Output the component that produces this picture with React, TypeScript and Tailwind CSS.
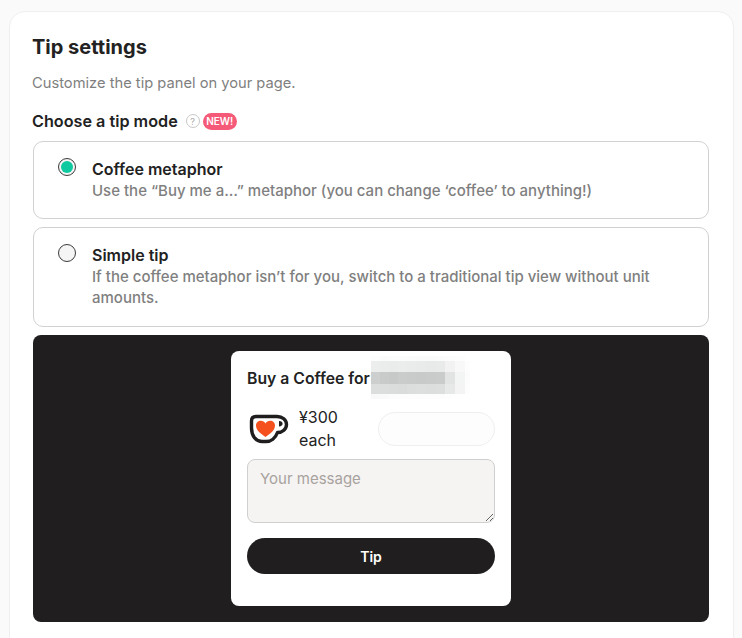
const font = { fontFamily: '"Inter", "Noto Sans", sans-serif' };

function Cup() {
  return (
    <svg width="42" height="32" viewBox="0 0 42 32" fill="none" className="shrink-0">
      <path d="M3.5 8C3.5 5 5.5 3.5 8 3.5H29C34.5 3.5 38.5 7 38.5 11.5C38.5 16 34.5 19.5 29.5 19.5C27.5 25 23 28.5 18 28.5H14C8 28.5 3.5 23 3.5 15Z" fill="#fff" stroke="#1f1d1d" strokeWidth="3.4" strokeLinejoin="round" />
      <path d="M17.5 24C13 21 8 17.5 8 12.6C8 9.6 10.2 7.8 12.8 7.8C14.8 7.8 16.5 8.8 17.5 10.4C18.5 8.8 20.2 7.8 22.2 7.8C24.8 7.8 27 9.6 27 12.6C27 17.5 22 21 17.5 24Z" fill="#f4511e" />
      <path d="M31 8V13.4C33.4 13.2 34.6 12.2 34.6 10.7C34.6 9.2 33.4 8.2 31 8Z" fill="#1f1d1d" />
    </svg>
  );
}

function Mosaic() {
  const widths = [9, 9, 9, 9, 9, 10, 10, 9, 10, 10, 5];
  const rows: { h: number; c: string[] }[] = [
    { h: 5, c: ["#fdfdfd", "#fbfbfb", "#fcfcfc", "#fcfcfc", "#fbfbfb", "#fafafa", "#fafafa", "#fbfbfb", "#fcfcfc", "#fdfdfd", "#ffffff"] },
    { h: 11, c: ["#eceeed", "#ebedec", "#eaeceb", "#ebedec", "#eaeceb", "#e9ebea", "#e8eae9", "#e9ebea", "#f1f2f1", "#f8f8f8", "#fdfdfd"] },
    { h: 12, c: ["#cdcfcf", "#c9cbcb", "#c7c9c9", "#cacccc", "#c9cbcb", "#c8caca", "#c9cbcb", "#cacccc", "#e2e4e4", "#f3f4f4", "#fcfcfc"] },
    { h: 10, c: ["#dcdede", "#dcdede", "#dbdddd", "#dadcdc", "#dcdede", "#dddfdf", "#dcdede", "#dddfdf", "#e7e9e9", "#f4f4f4", "#fdfdfd"] },
    { h: 5, c: ["#f9f9f9", "#fafafa", "#fcfcfc", "#fdfdfd", "#fdfdfd", "#fdfdfd", "#fdfdfd", "#fdfdfd", "#fefefe", "#ffffff", "#ffffff"] },
  ];
  let y = 0;
  return (
    <svg width="99" height="43" viewBox="0 0 99 43" shapeRendering="crispEdges" className="block">
      {rows.map((row, ri) => {
        let x = 0;
        const top = y;
        y += row.h;
        return row.c.map((c, ci) => {
          const left = x;
          x += widths[ci];
          return <rect key={`${ri}-${ci}`} x={left} y={top} width={widths[ci]} height={row.h} fill={c} />;
        });
      })}
    </svg>
  );
}

function Option({ selected, title, desc, h }: { selected?: boolean; title: string; desc: string; h: string }) {
  return (
    <div className={`flex items-start gap-4 rounded-[10px] border border-[#d1d1d1] bg-white pr-6 pl-6 pt-4 ${h}`}>
      <div className="flex h-[18px] w-[18px] shrink-0 items-center justify-center rounded-full border border-[#3a3a3a] bg-[#f6f5f5]">
        {selected && <div className="h-3 w-3 rounded-full bg-[#0fc9a0]" />}
      </div>
      <div className="min-w-0">
        <div className="text-[16px] leading-[22px] font-semibold text-[#222222]">{title}</div>
        <div className="text-[15px] leading-[21px] font-medium text-[#7f7f7f]">{desc}</div>
      </div>
    </div>
  );
}

export default function App() {
  return (
    <div className="h-[638px] w-[742px] overflow-hidden bg-[#fafafa] pt-[11px] pl-[9px]" style={font}>
      <div className="h-[640px] w-[725px] rounded-t-[16px] border border-[#efefef] bg-white pt-[23px] pr-6 pl-[22px]">
        <h2 className="text-[20px] leading-[24px] font-bold text-[#222222]">Tip settings</h2>
        <p className="mt-[13px] text-[14.7px] leading-[22px] text-[#7f7f7f]">Customize the tip panel on your page.</p>
        <div className="mt-[16px] flex items-center text-[16.2px] leading-[22px] font-semibold text-[#222222]">
          Choose a tip mode
          <span className="ml-[8px] flex h-[14px] w-[14px] items-center justify-center rounded-full border-[1.5px] border-[#c8c8c8] text-[9px] leading-none font-medium text-[#b0b0b0]">?</span>
          <span className="ml-[3px] flex h-[17px] w-[34px] items-center justify-center rounded-full bg-[#f55a78] text-[10px] leading-none font-semibold text-white">NEW!</span>
        </div>
        <div className="mt-[9px] ml-[1px] flex flex-col gap-2">
          <Option selected h="h-[78px]" title="Coffee metaphor" desc="Use the “Buy me a…” metaphor (you can change ‘coffee’ to anything!)" />
          <Option h="h-[100px]" title="Simple tip" desc="If the coffee metaphor isn’t for you, switch to a traditional tip view without unit amounts." />
        </div>
        <div className="mt-2 ml-[1px] flex h-[287px] justify-center rounded-[8px] bg-[#201e1e] pt-4">
          <div className="h-[255px] w-[280px] rounded-[8px] bg-white px-4 pt-[17px]">
            <div className="flex h-[22px] items-center text-[15.75px] font-semibold whitespace-nowrap text-[#222222]">
              Buy a Coffee for
              <div className="relative ml-[1px] h-[22px] w-[99px]">
                <div className="absolute -top-[12px] left-0"><Mosaic /></div>
              </div>
            </div>
            <div className="mt-[16px] flex h-[46px] items-center">
              <div className="ml-[1px]"><Cup /></div>
              <div className="ml-[9px] w-[58px] text-[16px] leading-[23px] text-[#222222]">¥300 each</div>
              <div className="ml-[21px] h-[34px] w-[117px] rounded-[17px] border border-[#efefef] bg-[#fdfdfd]" />
            </div>
            <textarea
              readOnly
              placeholder="Your message"
              className="mt-[7px] block h-[64px] w-[248px] rounded-[8px] border border-[#cfcfcf] bg-[#f5f4f3] px-3 pt-[9px] pb-2 text-[15px] leading-[20px] placeholder:text-[#a8a29e]"
            />
            <div className="mt-[15px] flex h-9 w-[248px] items-center justify-center rounded-[18px] bg-[#201e1e] text-[14px] font-semibold text-white">Tip</div>
          </div>
        </div>
      </div>
    </div>
  );
}
